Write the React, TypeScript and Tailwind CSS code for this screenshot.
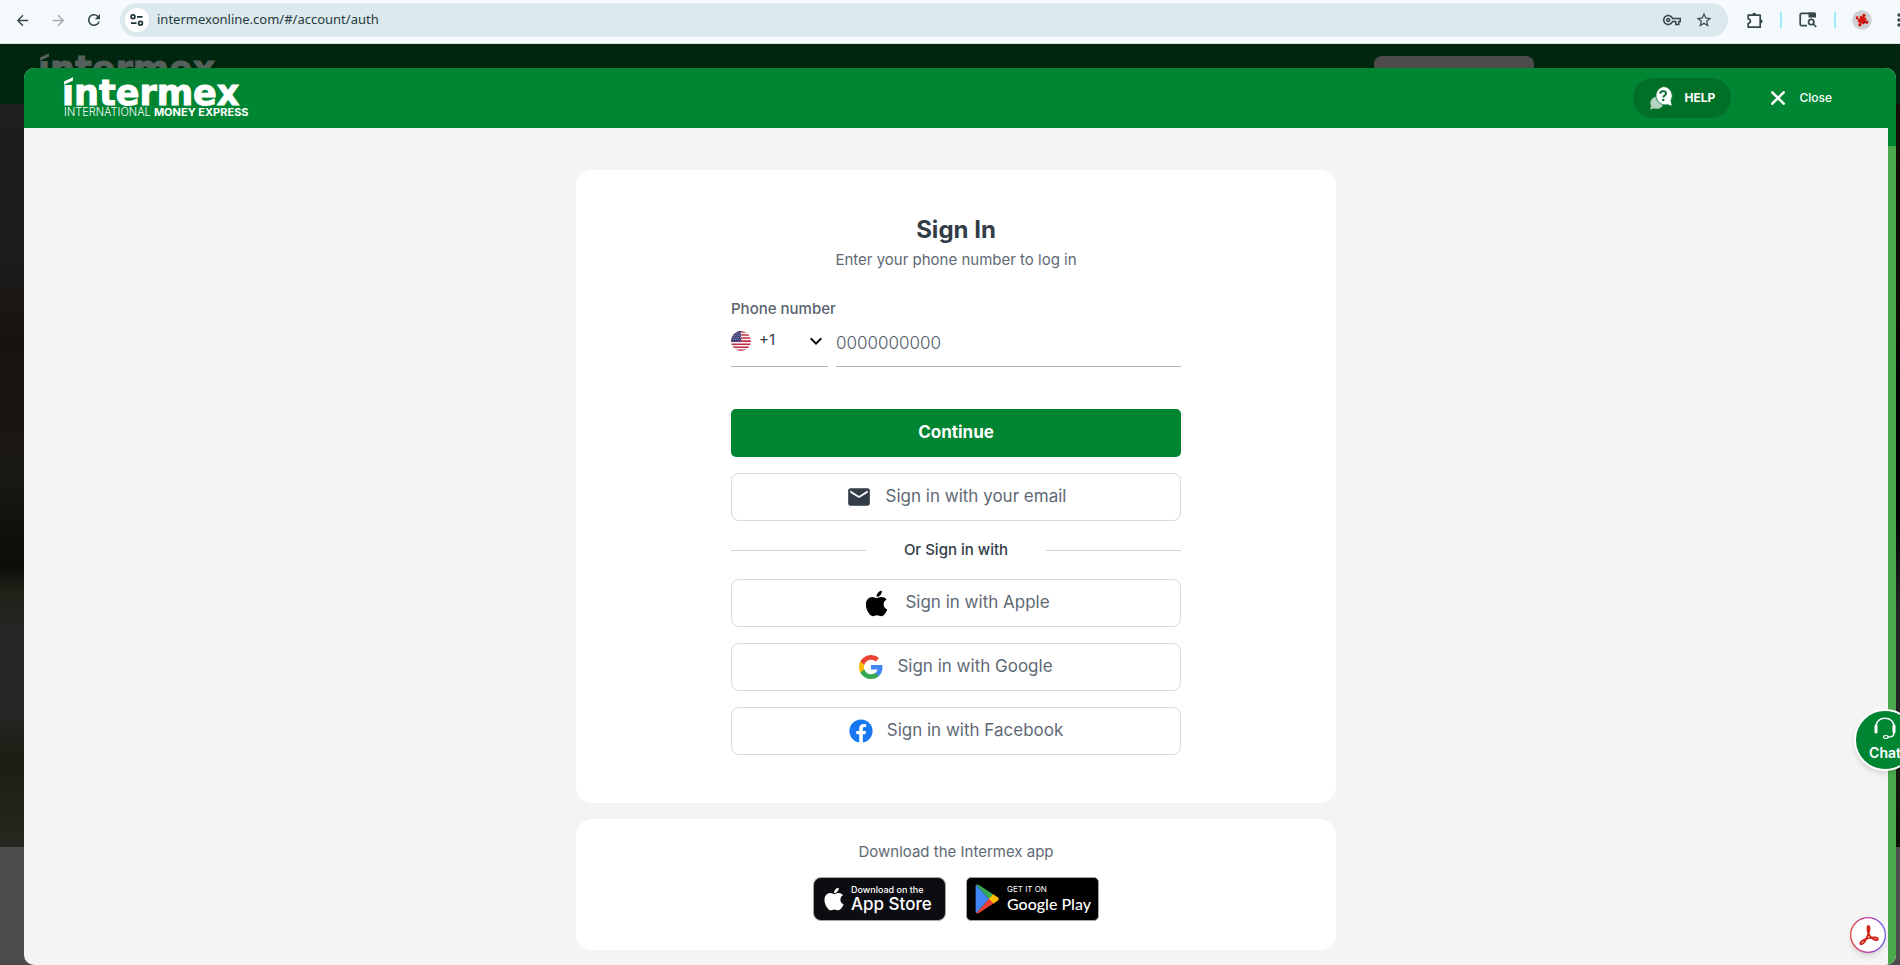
import type { ReactNode } from "react";
import { FaApple, FaFacebook } from "react-icons/fa";
import {
  MdArrowBack,
  MdArrowForward,
  MdEmail,
  MdKeyboardArrowDown,
  MdMoreVert,
  MdOutlineVpnKey,
  MdRefresh,
  MdStarBorder
} from "react-icons/md";

const iconButtonClass = "flex size-6 items-center justify-center";

function SiteSettingsIcon() {
  return (
    <svg width="14" height="12" viewBox="0 0 14 12" fill="none" stroke="#1f3338" strokeWidth="1.7">
      <circle cx="3" cy="2.8" r="1.9" />
      <path d="M7 2.8h5.5M1 9.2h5.5" />
      <circle cx="10.5" cy="9.2" r="1.9" />
    </svg>
  );
}

function ExtensionIcon() {
  return (
    <svg width="18" height="18" viewBox="0 0 18 18" fill="none" stroke="#35474b" strokeWidth="1.7">
      <path d="M2.2 4.2h12v12h-12v-3.8a2.2 2.2 0 0 0 0-4.4z" strokeLinejoin="round" />
      <path d="M6.2 3.8a2 2 0 0 1 4 0zM14.6 8.2a2 2 0 0 1 0 4z" fill="#35474b" stroke="none" />
    </svg>
  );
}

function TabSearchIcon() {
  return (
    <svg width="18" height="16" viewBox="0 0 18 16" fill="none" stroke="#35474b" strokeWidth="1.7">
      <path d="M8 13.6H2.6c-.8 0-1.4-.6-1.4-1.4V2.8c0-.8.6-1.4 1.4-1.4h12.2c.8 0 1.4.6 1.4 1.4v1.7" />
      <path d="M9.5.6h6c.9 0 1.5.7 1.5 1.5v3.4H9.5z" fill="#35474b" stroke="none" />
      <circle cx="12.2" cy="10" r="2.7" />
      <path d="m14.2 12 3 3" />
    </svg>
  );
}

function ProfileAvatar() {
  return (
    <svg width="20" height="20" viewBox="0 0 20 20">
      <circle cx="10" cy="10" r="9.8" fill="#cfd2d5" />
      <g transform="rotate(24 10 10)" fill="#d3170f">
        <rect x="6.5" y="6.5" width="7" height="7" />
        <circle cx="10" cy="5" r="1.7" />
        <circle cx="15.2" cy="10" r="1.7" />
        <circle cx="10" cy="15.2" r="1.7" />
        <circle cx="4.9" cy="10" r="1.7" />
      </g>
      <circle cx="7" cy="7.6" r="1" fill="#cfd2d5" />
      <circle cx="12.5" cy="12.4" r=".9" fill="#7e0c08" />
    </svg>
  );
}

function HelpIcon() {
  return (
    <svg width="24" height="24" viewBox="0 0 24 24">
      <path d="M4.8 11.5a6.2 6.2 0 1 1 3 11.3c-.9 0-1.8-.2-2.6-.6L.8 23.5l1.4-3.3a6.2 6.2 0 0 1 2.6-8.7z" fill="#fff" opacity=".7" />
      <path d="M14 .6a9.3 9.3 0 0 1 8 14l1.2 5.7-4.7-1.6A9.3 9.3 0 1 1 14 .6z" fill="#fff" stroke="#006b2a" strokeWidth=".8" />
      <path d="M11.2 7.6c.2-1.6 1.3-2.5 2.9-2.5 1.7 0 2.9.9 2.9 2.4 0 2.2-2.7 2-2.7 4.1" fill="none" stroke="#006b2a" strokeWidth="1.9" />
      <circle cx="14.3" cy="14" r="1.2" fill="#006b2a" />
    </svg>
  );
}

function CloseIcon() {
  return (
    <svg width="14" height="14" viewBox="0 0 14 14" stroke="#fff" strokeWidth="2.5" strokeLinecap="round">
      <path d="m1.3 1.3 11.4 11.4M12.7 1.3 1.3 12.7" />
    </svg>
  );
}

function UsFlagIcon() {
  return (
    <svg width="20" height="20" viewBox="0 0 20 20">
      <clipPath id="flag-circle">
        <circle cx="10" cy="10" r="10" />
      </clipPath>
      <g clipPath="url(#flag-circle)">
        <rect width="20" height="20" fill="#f7f0f1" />
        <path
          d="M0 .8h20M0 3.9h20M0 7h20M0 10.1h20M0 13.2h20M0 16.3h20M0 19.3h20"
          stroke="#c3304a"
          strokeWidth="1.55"
        />
        <rect width="10" height="10.8" fill="#46467f" />
        <path
          d="M1 2.5h9M2 4.5h9M1 6.5h9M2 8.5h9"
          stroke="#a9a9cc"
          strokeWidth=".7"
          strokeDasharray=".8 1.2"
        />
      </g>
    </svg>
  );
}

function GoogleIcon() {
  return (
    <svg width="24" height="24" viewBox="0 0 24 24">
      <path fill="#4285F4" d="M23.5 12.3c0-.8-.1-1.600-.2-2.300H12v4.500h6.500a5.500 5.500 0 0 1-2.400 3.600v3h3.900c2.200-2.100 3.500-5.200 3.500-8.800z" />
      <path fill="#34A853" d="M12 24c3.200 0 6-1.100 8-2.900l-3.900-3c-1.100.7-2.500 1.200-4.100 1.200-3.100 0-5.800-2.100-6.700-5H1.300v3.100A12 12 0 0 0 12 24z" />
      <path fill="#FBBC05" d="M5.300 14.300a7.200 7.200 0 0 1 0-4.600V6.600h-4a12 12 0 0 0 0 10.800z" />
      <path fill="#EA4335" d="M12 4.800c1.800 0 3.300.6 4.600 1.800L20 3.200A12 12 0 0 0 1.300 6.600l4 3.100c.9-2.800 3.600-4.900 6.700-4.900z" />
    </svg>
  );
}

function PlayIcon() {
  return (
    <svg width="24" height="30" viewBox="0 0 24 30">
      <path d="M1.2.8C.8 1.2.6 1.8.6 2.5v25c0 .7.2 1.3.6 1.7L14 15z" fill="#4285F4" />
      <path d="M1.2.8 14 15l4.400-4.600L4 .9C3 .3 1.900.2 1.200.8z" fill="#34A853" />
      <path d="M18.3 10.3 13.6 15l4.7 4.7 4.4-2.9c1.3-.9 1.3-2.7 0-3.6z" fill="#FBBC04" />
      <path d="M1.2 29.2c.7.6 1.8.5 2.8-.1l14.4-9.500L13.800 15z" fill="#EA4335" />
    </svg>
  );
}

function HeadsetIcon() {
  return (
    <svg width="24" height="22" viewBox="0 0 22 22" fill="none" stroke="#fff">
      <path d="M2 9.5C2 4.5 5.8 1.2 11 1.2s9 3.3 9 8.3" strokeWidth="1.5" />
      <path d="M2 9v6M20 9v6" strokeWidth="3" strokeLinecap="round" />
      <path d="M20 16c0 2.8-2.7 4.2-6.3 4.2" strokeWidth="1.3" />
      <ellipse cx="11.8" cy="20" rx="2.3" ry="1.5" strokeWidth="1.2" />
    </svg>
  );
}

function AcrobatIcon() {
  return (
    <svg width="36" height="36" viewBox="0 0 36 36">
      <linearGradient id="acrobat-ring" x1="0" x2="1" y1="0" y2="0">
        <stop offset="0" stopColor="#e0332f" />
        <stop offset=".5" stopColor="#c13bb0" />
        <stop offset="1" stopColor="#5a55e8" />
      </linearGradient>
      <circle cx="18" cy="18" r="17.3" fill="#fff" stroke="url(#acrobat-ring)" strokeWidth="1.2" />
      <path
        d="M18.5 9c1.5.2 1.2 3.7.1 7-1.5 4.5-4.6 10.8-7 11.2-1.8.2-1.8-1.7.8-3.4 3.4-2.2 8.7-3.6 12.2-3.5 2.7.1 3.900 1.500 2.900 2.400-1.800 1.400-6.300-1.400-8.200-4.500-1.900-3-2.600-9.300-.8-9.200z"
        fill="none"
        stroke="#cf1d12"
        strokeWidth="1.8"
      />
    </svg>
  );
}

function BrandMark({ className, patchClass }: { className: string; patchClass: string }) {
  return (
    <span
      className={`relative -ml-[2px] block font-['DejaVu_Sans',sans-serif] text-[35px] leading-[26px] font-bold [-webkit-text-stroke:1px_currentColor] ${className}`}
    >
      intermex
      {/* slanted stroke that stands in for the dot of the i */}
      <svg className={`absolute -top-[3px] left-0 ${patchClass}`} width="12" height="9" viewBox="0 0 12 9">
        <rect width="12" height="8" />
        <path d="M2 4.4 11 .2v3.4L2 7.700z" fill="currentColor" />
      </svg>
    </span>
  );
}

function BrowserBar() {
  return (
    <div className="flex h-11 items-center border-b border-[#d5dfe1] bg-[#f5fafc] pb-[3px] pl-[10px] font-['Noto_Sans',sans-serif] text-[#35474b]">
      <button aria-label="Back" className={iconButtonClass}>
        <MdArrowBack size={17} />
      </button>
      <button aria-label="Forward" className={`${iconButtonClass} ml-3 text-[#a3a9ab]`}>
        <MdArrowForward size={17} />
      </button>
      <button aria-label="Reload" className={`${iconButtonClass} ml-3`}>
        <MdRefresh size={18} />
      </button>
      <div className="ml-[14px] flex h-[34px] flex-1 items-center rounded-full bg-[#dce9ee] pr-3 pl-[5px]">
        <button aria-label="Site information" className="flex size-6 items-center justify-center rounded-full bg-white">
          <SiteSettingsIcon />
        </button>
        <input
          aria-label="Address"
          className="ml-2 min-w-0 flex-1 bg-transparent text-[13px] text-[#263a40] outline-none"
          defaultValue="intermexonline.com/#/account/auth"
        />
        <button aria-label="Passwords" className={iconButtonClass}>
          <MdOutlineVpnKey size={18} />
        </button>
        <button aria-label="Bookmark" className={`${iconButtonClass} ml-2`}>
          <MdStarBorder size={18} />
        </button>
      </div>
      <button aria-label="Extensions" className={`${iconButtonClass} ml-[15px]`}>
        <ExtensionIcon />
      </button>
      <span className="ml-[13px] h-4 w-[2px] bg-[#a0ecfb]" />
      <button aria-label="Search tabs" className={`${iconButtonClass} ml-[14px]`}>
        <TabSearchIcon />
      </button>
      <span className="ml-[14px] h-4 w-[2px] bg-[#a0ecfb]" />
      <button aria-label="Profile" className={`${iconButtonClass} ml-[14px]`}>
        <ProfileAvatar />
      </button>
      <button aria-label="More" className="ml-[15px] flex w-[11px] overflow-hidden">
        <MdMoreVert className="shrink-0" size={20} />
      </button>
    </div>
  );
}

function PageBackdrop() {
  return (
    <div className="flex flex-1 flex-col" aria-hidden="true">
      <div className="flex h-[60px] justify-between bg-[#00260f] pt-3 pl-10">
        <BrandMark className="text-[#55605a]" patchClass="fill-[#00260f]" />
        <div className="mr-[366px] h-10 w-40 rounded-lg bg-[#4c4a4c]" />
      </div>
      <div className="flex flex-1">
        <div className="w-1/2 bg-[linear-gradient(180deg,#201e1d_0%,#1d1c1b_20%,#17130f_32%,#1a1814_50%,#0d0c09_62%,#22221a_66%,#262727_72%,#262727_82%,#1d1d12_88%,#28271f_100%)]" />
        <div className="w-1/2 bg-[linear-gradient(180deg,#150c02_0%,#120b02_25%,#000000_40%,#000000_55%,#24231f_68%,#24231f_80%,#0d0c06_100%)]" />
      </div>
      <div className="h-[118px] bg-[#4b4b4b]" />
    </div>
  );
}

function ModalHeader() {
  return (
    <header className="flex h-[60px] items-center justify-between bg-[#008533] pr-16 pl-10 text-white">
      <div>
        <BrandMark className="text-white" patchClass="fill-[#008533]" />
        <p className="mt-px text-[11px] leading-[10px] font-light whitespace-nowrap">
          INTERNATIONAL <span className="font-bold">MONEY EXPRESS</span>
        </p>
      </div>
      <div className="flex items-center">
        <button className="flex h-10 items-center gap-3 rounded-full bg-[#007029] px-4 text-[12px] font-bold">
          <HelpIcon />
          HELP
        </button>
        <button className="ml-10 flex items-center gap-[14px] text-[12px] font-medium">
          <CloseIcon />
          Close
        </button>
      </div>
    </header>
  );
}

function SignInOption({ icon, children }: { icon: ReactNode; children: ReactNode }) {
  return (
    <button className="flex h-12 w-full items-center justify-center gap-[14px] rounded-lg border border-[#d9dadc] text-[17px] text-[#5f6975]">
      {icon}
      {children}
    </button>
  );
}

function PhoneField() {
  return (
    <div>
      <label htmlFor="phone" className="block text-[15px] leading-5 font-medium text-[#5a6470]">
        Phone number
      </label>
      <div className="mt-2 flex gap-2">
        <div className="relative flex h-10 w-[97px] items-center border-b border-[#b1b3b6] pb-3">
          <UsFlagIcon />
          <select
            aria-label="Country code"
            className="min-w-0 flex-1 appearance-none bg-transparent pl-2 text-[15px] text-[#333d47] outline-none"
          >
            <option>+1</option>
          </select>
          <MdKeyboardArrowDown className="pointer-events-none absolute right-0 text-[#111]" size={24} />
        </div>
        <input
          id="phone"
          type="tel"
          placeholder="0000000000"
          className="h-10 min-w-0 flex-1 border-b border-[#b1b3b6] pb-2 text-[17px] font-light outline-none placeholder:text-[#4f5966]"
        />
      </div>
    </div>
  );
}

function SignInCard() {
  return (
    <section className="flex w-full max-w-[760px] flex-col items-center rounded-2xl bg-white py-12">
      <h1 className="text-[24px] leading-6 font-bold text-[#333d47]">Sign In</h1>
      <p className="mt-2 text-[15px] leading-5 text-[#5f6975]">Enter your phone number to log in</p>
      <form className="mt-[29px] w-full max-w-[450px]" onSubmit={(event) => event.preventDefault()}>
        <PhoneField />
        <button className="mt-[42px] h-12 w-full rounded-[5px] bg-[#008533] text-[17px] font-bold text-white">
          Continue
        </button>
        <div className="mt-4">
          <SignInOption icon={<MdEmail className="text-[#333d47]" size={26} />}>Sign in with your email</SignInOption>
        </div>
        <div className="my-[19px] flex items-center">
          <span className="h-px w-[30%] bg-[#d0d1d3]" />
          <span className="flex-1 text-center text-[15px] leading-5 font-medium text-[#333d47]">Or Sign in with</span>
          <span className="h-px w-[30%] bg-[#d0d1d3]" />
        </div>
        <div className="flex flex-col gap-4">
          <SignInOption icon={<FaApple className="text-black" size={29} />}>Sign in with Apple</SignInOption>
          <SignInOption icon={<GoogleIcon />}>Sign in with Google</SignInOption>
          <SignInOption icon={<FaFacebook className="text-[#1877f2]" size={24} />}>Sign in with Facebook</SignInOption>
        </div>
      </form>
    </section>
  );
}

function DownloadCard() {
  return (
    <section className="flex w-full max-w-[760px] flex-col items-center rounded-2xl bg-white pt-[23px] pb-[29px]">
      <p className="text-[15px] leading-5 text-[#5f6975]">Download the Intermex app</p>
      <div className="mt-[15px] flex gap-5">
        <a
          href="#app-store"
          className="flex h-11 w-[133px] items-center gap-1 rounded-lg border border-[#a6a6a6] bg-[#0b0d10] pl-[7px] text-white"
        >
          <FaApple size={26} className="shrink-0" />
          <span className="whitespace-nowrap">
            <span className="block text-[9px] leading-[10px] font-medium">Download on the</span>
            <span className="block text-[17px] leading-[18px] font-medium">App Store</span>
          </span>
        </a>
        <a
          href="#google-play"
          className="flex h-11 w-[133px] items-center gap-2 rounded-[5px] border border-[#a6a6a6] bg-black pl-2 text-white"
        >
          <PlayIcon />
          <span className="whitespace-nowrap">
            <span className="block text-[8px] leading-[10px]">GET IT ON</span>
            <span className="block font-['Lato',sans-serif] text-[16px] leading-5 font-medium">Google Play</span>
          </span>
        </a>
      </div>
    </section>
  );
}

export default function App() {
  return (
    <div className="flex min-h-screen flex-col overflow-hidden font-['Inter',sans-serif]">
      <BrowserBar />
      <div className="relative flex flex-1 flex-col overflow-hidden">
        <div className="absolute inset-0 flex flex-col">
          <PageBackdrop />
        </div>
        <div
          role="dialog"
          aria-label="Sign In"
          className="relative mt-6 mr-1 ml-6 flex flex-1 flex-col overflow-hidden rounded-[10px] bg-[#f4f4f4]"
        >
          <ModalHeader />
          <div className="flex flex-1">
            <main className="flex flex-1 flex-col items-center gap-4 pt-[42px] pb-[14px]">
              <SignInCard />
              <DownloadCard />
            </main>
            <div className="w-2 bg-[#4ca94c]">
              <div className="h-[18px] bg-[#008533]" />
            </div>
          </div>
        </div>
        <button className="absolute -right-4 bottom-[194px] flex size-[62px] flex-col items-center gap-1 rounded-full border-2 border-white bg-[#008533] pt-[6px] text-[14px] leading-5 font-semibold text-white shadow-md">
          <HeadsetIcon />
          Chat
        </button>
        <button aria-label="Open in Acrobat" className="absolute right-[14px] bottom-3 rounded-full shadow-md">
          <AcrobatIcon />
        </button>
      </div>
    </div>
  );
}
